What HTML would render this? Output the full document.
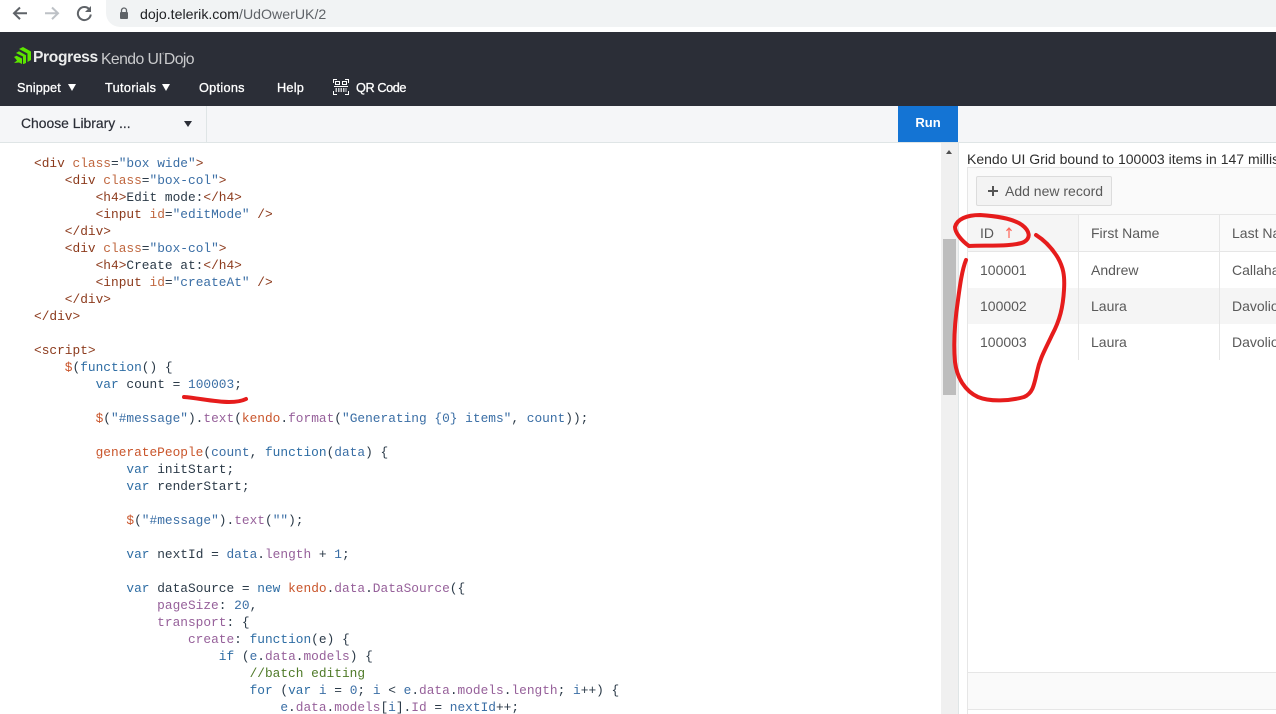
<!DOCTYPE html>
<html><head><meta charset="utf-8"><style>
html,body{margin:0;padding:0;background:#fff;width:1276px;height:714px;overflow:hidden}
body{position:relative;font-family:"Liberation Sans",sans-serif}
.a{position:absolute}
.n{position:absolute;top:80px;line-height:17px;font-size:12.7px;color:#fff;-webkit-text-stroke:.3px #fff;white-space:nowrap}
#code{position:absolute;left:34px;top:155px;margin:0;font:12.83px/17px "Liberation Mono",monospace;color:#2b3a48;white-space:pre}
.t{color:#8c3a1c}.at{color:#c0673f}.s{color:#3a6ea5}.k{color:#2e6da4}.f{color:#c9552b}.p{color:#96609a}.c{color:#4f7a28}
.g{position:absolute;font-size:14px;line-height:20px;color:#595959;white-space:nowrap}
</style></head><body>
<!-- browser bar -->
<div class="a" style="left:0;top:0;width:1276px;height:32px;background:#fff"></div>
<div class="a" style="left:106px;top:0;width:1170px;height:27px;background:#f1f3f4;border-radius:0 0 0 14px"></div>
<svg class="a" style="left:0;top:0" width="110" height="30" viewBox="0 0 110 30" fill="none">
<path d="M27 13.300H14.500M20 7.500l-6 5.800 6 5.800" stroke="#5f6368" stroke-width="2"/>
<path d="M45 13.300h12.500M52 7.500l6 5.800-6 5.800" stroke="#bdc1c6" stroke-width="2"/>
<path d="M89.300 9.300A6.500 6.500 0 1 0 90.800 14.500" stroke="#5f6368" stroke-width="2"/>
<path d="M91 6v6h-6z" fill="#5f6368"/>
</svg>
<svg class="a" style="left:119px;top:7px" width="10" height="13" viewBox="0 0 10 13"><path d="M2.500 5V3.500a2.500 2.500 0 0 1 5 0V5" fill="none" stroke="#5f6368" stroke-width="1.300"/><rect x="1" y="5" width="8" height="7" rx="1" fill="#5f6368"/></svg>
<div class="a" style="left:140px;top:5px;font-size:14.150px;line-height:18px;color:#5f6368;white-space:nowrap"><span style="color:#202124">dojo.telerik.com</span>/UdOwerUK/2</div>
<!-- dark header -->
<div class="a" style="left:0;top:32px;width:1276px;height:74px;background:#2b2e37"></div>
<svg class="a" style="left:14px;top:47px" width="17" height="17" viewBox="0 0 17 17"><path d="M5 2L9 0l8 4.500V13l-3.500 2V6.500z" fill="#5ce500"/><path d="M2 6l3-1.700 7 3.900V16l-3 1.300V9.500z" fill="#5ce500"/><path d="M0 10l2.500-1.300L8 11.500V17l-3-1.500-5 .5 3-2.500L1 11z" fill="#5ce500"/></svg>
<div class="a" style="left:33px;top:48px;font-size:15.600px;line-height:20px;font-weight:bold;color:#eceded;letter-spacing:-.35px;white-space:nowrap">Progress</div>
<div class="a" style="left:101px;top:46px;font-size:15.800px;line-height:20px;color:#c9cacc;letter-spacing:-.6px;white-space:nowrap">Kendo UI<span style="font-size:6px;vertical-align:7px">&#176;</span>Dojo</div>
<div class="n" style="left:17px;letter-spacing:.12px">Snippet</div>
<div class="a" style="left:68px;top:84px;width:0;height:0;border:4.500px solid transparent;border-top:7px solid #fff;border-bottom:0"></div>
<div class="n" style="left:105px;letter-spacing:.35px">Tutorials</div>
<div class="a" style="left:162px;top:84px;width:0;height:0;border:4.500px solid transparent;border-top:7px solid #fff;border-bottom:0"></div>
<div class="n" style="left:199px;letter-spacing:.3px">Options</div>
<div class="n" style="left:277px;letter-spacing:.25px">Help</div>
<svg class="a" style="left:333px;top:79px" width="16" height="16" viewBox="0 0 16 16" fill="none" stroke="#fff" stroke-width="1"><path d="M.5 4V.5H4M12 .5h3.500V4M.5 12v3.500H4M12 15.500h3.500V12"/><rect x="2.500" y="2.500" width="4" height="3"/><rect x="9.500" y="2.500" width="4" height="3"/><path d="M1 7.500h14" stroke-width="1"/><path d="M2.500 10h11M2.500 12h11" stroke-width="1.500" stroke-dasharray="1.500 1"/></svg>
<div class="n" style="left:356px;letter-spacing:-.4px">QR Code</div>
<!-- toolbar -->
<div class="a" style="left:0;top:106px;width:1276px;height:36px;background:#f5f6f8;border-bottom:1px solid #dfe5e6"></div>
<div class="a" style="left:206px;top:106px;width:1px;height:36px;background:#dfe5e6"></div>
<div class="a" style="left:21px;top:115px;font-size:13.900px;line-height:17px;color:#2b2e37;-webkit-text-stroke:.2px #2b2e37;white-space:nowrap">Choose Library ...</div>
<div class="a" style="left:184px;top:121px;width:0;height:0;border:4px solid transparent;border-top:6px solid #2b2e37;border-bottom:0"></div>
<div class="a" style="left:898px;top:106px;width:60px;height:36px;background:#1474d4;color:#fff;font-size:13px;font-weight:bold;line-height:33px;text-align:center">Run</div>
<!-- code -->
<pre id="code"><span class="t">&lt;div</span> <span class="at">class</span>=<span class="s">"box wide"</span><span class="t">&gt;</span>
    <span class="t">&lt;div</span> <span class="at">class</span>=<span class="s">"box-col"</span><span class="t">&gt;</span>
        <span class="t">&lt;h4&gt;</span>Edit mode:<span class="t">&lt;/h4&gt;</span>
        <span class="t">&lt;input</span> <span class="at">id</span>=<span class="s">"editMode"</span> <span class="t">/&gt;</span>
    <span class="t">&lt;/div&gt;</span>
    <span class="t">&lt;div</span> <span class="at">class</span>=<span class="s">"box-col"</span><span class="t">&gt;</span>
        <span class="t">&lt;h4&gt;</span>Create at:<span class="t">&lt;/h4&gt;</span>
        <span class="t">&lt;input</span> <span class="at">id</span>=<span class="s">"createAt"</span> <span class="t">/&gt;</span>
    <span class="t">&lt;/div&gt;</span>
<span class="t">&lt;/div&gt;</span>

<span class="t">&lt;script&gt;</span>
    <span class="f">$</span>(<span class="k">function</span>() {
        <span class="k">var</span> count = <span class="s">100003</span>;

        <span class="f">$</span>(<span class="s">"#message"</span>).<span class="p">text</span>(<span class="f">kendo</span>.<span class="p">format</span>(<span class="s">"Generating {0} items"</span>, <span class="s">count</span>));

        <span class="f">generatePeople</span>(<span class="s">count</span>, <span class="k">function</span>(<span class="s">data</span>) {
            <span class="k">var</span> initStart;
            <span class="k">var</span> renderStart;

            <span class="f">$</span>(<span class="s">"#message"</span>).<span class="p">text</span>(<span class="s">""</span>);

            <span class="k">var</span> nextId = <span class="s">data</span>.<span class="p">length</span> + <span class="s">1</span>;

            <span class="k">var</span> dataSource = <span class="k">new</span> <span class="f">kendo</span>.<span class="p">data</span>.<span class="p">DataSource</span>({
                <span class="p">pageSize</span>: <span class="s">20</span>,
                <span class="p">transport</span>: {
                    <span class="p">create</span>: <span class="k">function</span>(e) {
                        <span class="k">if</span> (<span class="s">e</span>.<span class="p">data</span>.<span class="p">models</span>) {
                            <span class="c">//batch editing</span>
                            <span class="k">for</span> (<span class="k">var</span> <span class="s">i</span> = <span class="s">0</span>; <span class="s">i</span> &lt; <span class="s">e</span>.<span class="p">data</span>.<span class="p">models</span>.<span class="p">length</span>; <span class="s">i</span>++) {
                                <span class="s">e</span>.<span class="p">data</span>.<span class="p">models</span>[<span class="s">i</span>].<span class="p">Id</span> = <span class="s">nextId</span>++;</pre>
<!-- scrollbar -->
<div class="a" style="left:941px;top:143px;width:17px;height:571px;background:#f0f0f0"></div>
<div class="a" style="left:943px;top:239px;width:13px;height:156px;background:#bdbdbd"></div>
<div class="a" style="left:946px;top:150px;width:0;height:0;border:3.500px solid transparent;border-bottom:4px solid #505050;border-top:0"></div>
<div class="a" style="left:958px;top:143px;width:1px;height:571px;background:#dfe5e6"></div>
<!-- preview -->
<div class="a" style="left:967px;top:150px;font-size:14px;line-height:18px;color:#2e2e2e;white-space:nowrap;width:309px;overflow:hidden">Kendo UI Grid bound to 100003 items in 147 milliseconds</div>
<div class="a" style="left:967px;top:167px;width:309px;height:47px;background:#fafafa;border-top:1px solid #e6e6e6;border-left:1px solid #e6e6e6;box-sizing:border-box"></div>
<div class="a" style="left:976px;top:176px;width:134px;height:28px;background:#f3f3f3;border:1px solid #dcdcdc;border-radius:2px"></div>
<div class="a" style="left:988px;top:190px;width:10px;height:2px;background:#555"></div>
<div class="a" style="left:992px;top:186px;width:2px;height:10px;background:#555"></div>
<div class="g" style="left:1005px;top:181px">Add new record</div>
<div class="a" style="left:967px;top:214px;width:309px;height:38px;background:#fafafa;border-top:1px solid #e6e6e6;border-bottom:1px solid #e6e6e6;box-sizing:border-box"></div>
<div class="a" style="left:968px;top:215px;width:110px;height:36px;background:#f5f5f5"></div>
<div class="a" style="left:968px;top:288px;width:308px;height:36px;background:#f5f5f5"></div>
<div class="a" style="left:1078px;top:214px;width:1px;height:146px;background:#e6e6e6"></div>
<div class="a" style="left:1219px;top:214px;width:1px;height:146px;background:#e6e6e6"></div>
<div class="a" style="left:967px;top:214px;width:1px;height:500px;background:#e6e6e6"></div>
<div class="g" style="left:980px;top:223px">ID</div>
<div class="g" style="left:1091px;top:223px">First Name</div>
<div class="g" style="left:1232px;top:223px">Last Name</div>
<svg class="a" style="left:1004px;top:227px" width="10" height="12" viewBox="0 0 10 12" fill="none" stroke="#ff6358" stroke-width="1.200"><path d="M5 1v10M2.500 3.800L5 1l2.500 2.800"/></svg>
<div class="g" style="left:980px;top:260px">100001</div>
<div class="g" style="left:1091px;top:260px">Andrew</div>
<div class="g" style="left:1232px;top:260px">Callahan</div>
<div class="g" style="left:980px;top:296px">100002</div>
<div class="g" style="left:1091px;top:296px">Laura</div>
<div class="g" style="left:1232px;top:296px">Davolio</div>
<div class="g" style="left:980px;top:332px">100003</div>
<div class="g" style="left:1091px;top:332px">Laura</div>
<div class="g" style="left:1232px;top:332px">Davolio</div>
<div class="a" style="left:967px;top:672px;width:309px;height:38px;background:#fafafa;border-top:1px solid #e6e6e6;border-bottom:1px solid #e6e6e6;border-left:1px solid #e6e6e6;box-sizing:border-box"></div>
<!-- red annotations -->
<svg class="a" style="left:0;top:0" width="1276" height="714" viewBox="0 0 1276 714" fill="none" stroke="#e61c1c" stroke-width="4" stroke-linecap="round" stroke-linejoin="round">
<path d="M184 397C198 398 214 402 229 402C236 402 242 401 246 399" stroke-width="4"/>
<path d="M969 246C962 241 955 233 955 227C957 219 967 215 980 215C995 216 1012 218 1022 225C1030 231 1031 238 1024 242C1013 247 985 245 969 246"/>
<path d="M1036 235C1044 240 1052 248 1058 258C1063 267 1065 275 1064 290C1063 307 1060 320 1052 335C1045 350 1040 358 1037 372C1034 385 1033 393 1024 397C1010 401 990 402 978 397C965 391 957 378 955 362C953 340 955 320 958 300C960 285 962 270 966 260"/>
</svg>
</body></html>
